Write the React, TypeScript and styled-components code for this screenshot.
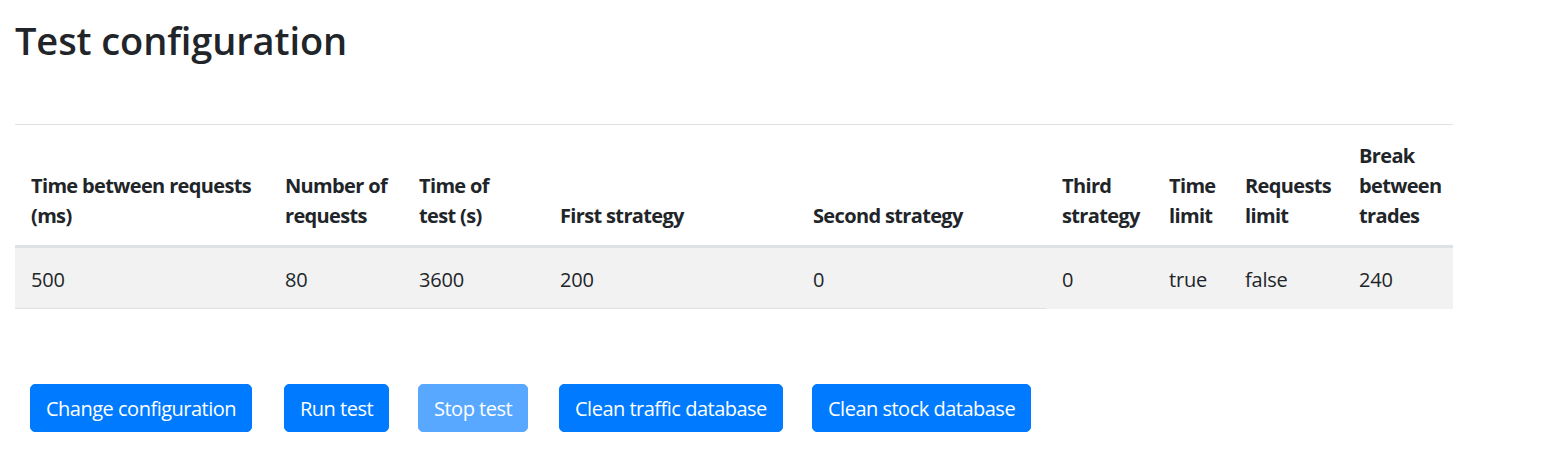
import React from "react";
import styled, { createGlobalStyle } from "styled-components";

const GlobalStyle = createGlobalStyle`
  html, body {
    margin: 0;
    padding: 0;
    background: #ffffff;
    color: #212529;
    font-family: "Open Sans", "Noto Sans", sans-serif;
    font-size: 20px;
    line-height: 30px;
  }
  * { box-sizing: border-box; }
`;

const Page = styled.div`
  padding: 16px 90px 0 15px;
`;

const Title = styled.h1`
  margin: 0 0 60px 0;
  font-size: 38px;
  line-height: 48px;
  font-weight: 600;
  letter-spacing: -0.1px;
  color: #212529;
`;

const Table = styled.table`
  width: 1438px;
  border-collapse: collapse;
  table-layout: fixed;
  margin-bottom: 20px;
`;

const HeadCell = styled.th`
  padding: 16px 15px 14px 16px;
  text-align: left;
  vertical-align: bottom;
  font-weight: 700;
  letter-spacing: -0.65px;
  white-space: nowrap;
  border-top: 1px solid #dee2e6;
  border-bottom: 3px solid #dee2e6;
`;

const DataRow = styled.tr<{ $striped?: boolean }>`
  background: ${(p) => (p.$striped ? "#f2f2f2" : "transparent")};
`;

const Cell = styled.td<{ $bordered?: boolean }>`
  padding: 17px 15px 13px 16px;
  vertical-align: top;
  white-space: nowrap;
  letter-spacing: -0.2px;
  border-top: ${(p) => (p.$bordered ? "1px solid #dee2e6" : "none")};
`;

const ButtonCell = styled(Cell)`
  padding-top: 75px;
  padding-bottom: 15px;
  padding-left: 15px;
`;

const Button = styled.button<{ $disabled?: boolean }>`
  display: inline-block;
  font-family: inherit;
  font-size: 20px;
  line-height: 30px;
  font-weight: 400;
  letter-spacing: -0.5px;
  color: #ffffff;
  background: #007bff;
  border: 1px solid #007bff;
  border-radius: 5px;
  padding: 9px 15px 7px;
  white-space: nowrap;
  cursor: pointer;
  opacity: ${(p) => (p.$disabled ? 0.65 : 1)};
`;

const widths = [254, 134, 141, 253, 249, 107, 76, 114, 110];

const headers: string[][] = [
  ["Time between requests", "(ms)"],
  ["Number of", "requests"],
  ["Time of", "test (s)"],
  ["First strategy"],
  ["Second strategy"],
  ["Third", "strategy"],
  ["Time", "limit"],
  ["Requests", "limit"],
  ["Break", "between", "trades"],
];

const values = ["500", "80", "3600", "200", "0", "0", "true", "false", "240"];

const buttons: { label: string; disabled?: boolean }[] = [
  { label: "Change configuration" },
  { label: "Run test" },
  { label: "Stop test", disabled: true },
  { label: "Clean traffic database" },
  { label: "Clean stock database" },
];

export default function App() {
  return (
    <>
      <GlobalStyle />
      <Page>
        <Title>Test configuration</Title>
        <Table>
          <colgroup>
            {widths.map((w, i) => (
              <col key={i} style={{ width: w }} />
            ))}
          </colgroup>
          <thead>
            <tr>
              {headers.map((lines, i) => (
                <HeadCell key={i}>
                  {lines.map((l, j) => (
                    <React.Fragment key={j}>
                      {j > 0 && <br />}
                      {l}
                    </React.Fragment>
                  ))}
                </HeadCell>
              ))}
            </tr>
          </thead>
          <tbody>
            <DataRow $striped>
              {values.map((v, i) => (
                <Cell key={i}>{v}</Cell>
              ))}
            </DataRow>
            <DataRow>
              {buttons.map((b, i) => (
                <ButtonCell key={i} $bordered>
                  <Button $disabled={b.disabled}>{b.label}</Button>
                </ButtonCell>
              ))}
            </DataRow>
          </tbody>
        </Table>
      </Page>
    </>
  );
}
